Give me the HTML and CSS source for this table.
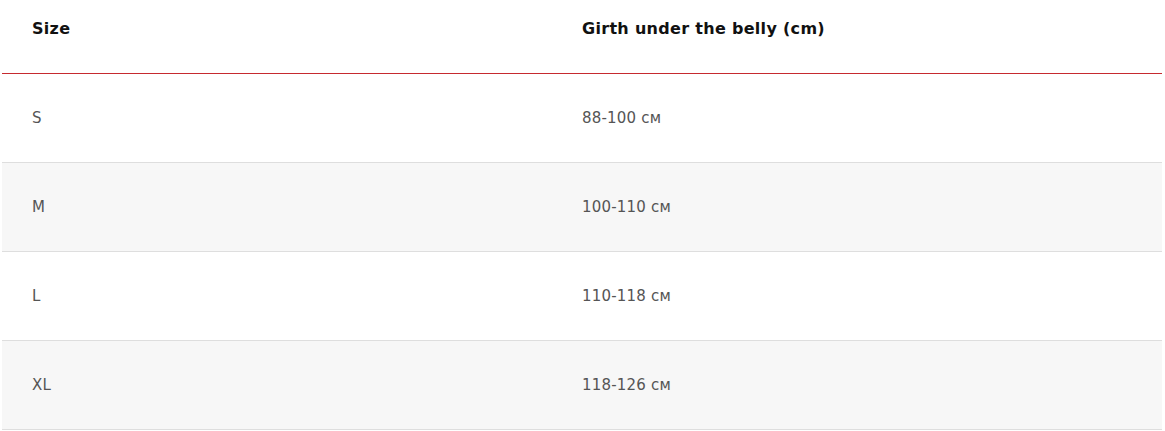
FILE: index.html
```html
<!DOCTYPE html>
<html>
<head>
<meta charset="utf-8">
<link rel="stylesheet" href="styles.css">
</head>
<body>
<table class="size-table">
  <colgroup><col class="col-size"><col></colgroup>
  <thead>
    <tr><th>Size</th><th>Girth under the belly (cm)</th></tr>
  </thead>
  <tbody>
    <tr><td>S</td><td>88-100 см</td></tr>
    <tr class="alt"><td>M</td><td>100-110 см</td></tr>
    <tr><td>L</td><td>110-118 см</td></tr>
    <tr class="alt"><td>XL</td><td>118-126 см</td></tr>
  </tbody>
</table>
</body>
</html>
```
FILE: styles.css
```css
html, body {
  margin: 0;
  padding: 0;
  background: #fff;
}
body {
  padding: 0 3px 0 2px;
  font-family: "DejaVu Sans", sans-serif;
}
.size-table {
  width: 1160px;
  border-collapse: collapse;
  table-layout: fixed;
}
.col-size {
  width: 550px;
}
.size-table th {
  text-align: left;
  font-weight: 700;
  font-size: 16px;
  letter-spacing: 0.3px;
  color: #111;
  padding: 0 30px;
  height: 56px;
  vertical-align: middle;
  border-bottom: 1px solid #c62a2f;
  padding-bottom: 17px;
}
.size-table td {
  font-size: 15px;
  letter-spacing: 0.2px;
  color: #555;
  padding: 0 30px;
  height: 88px;
  border-bottom: 1px solid #dedede;
  vertical-align: middle;
}
.size-table tr.alt td {
  background: #f7f7f7;
}
```
